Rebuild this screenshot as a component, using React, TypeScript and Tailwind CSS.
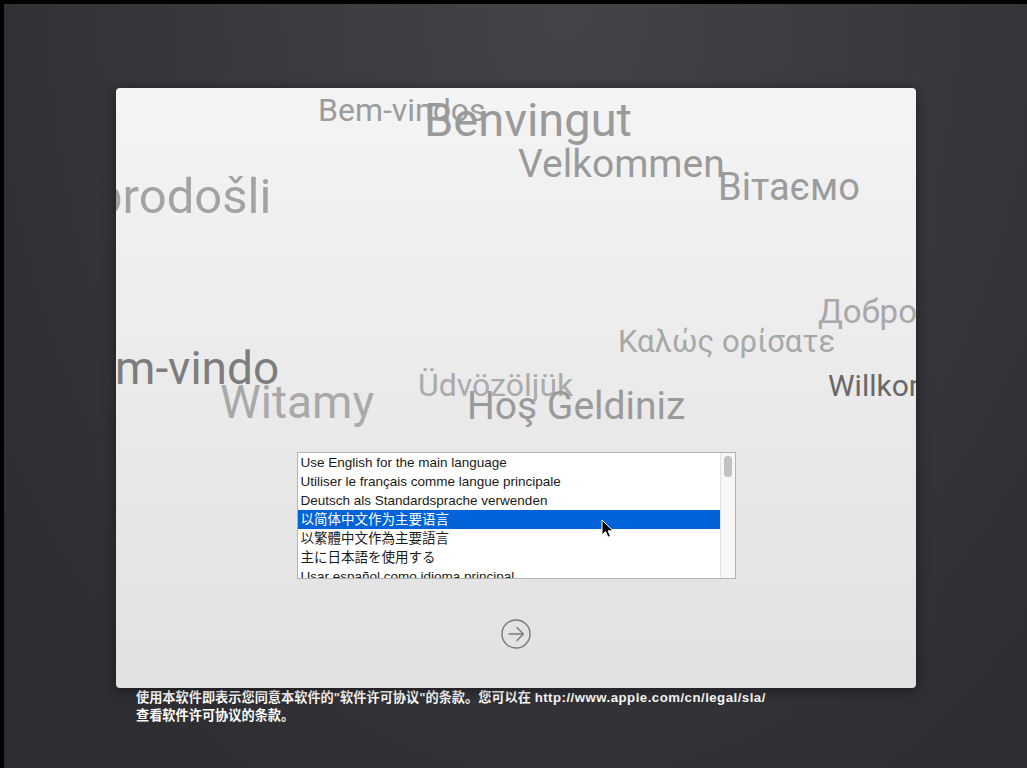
import React from "react";

// Welcome words scattered over the panel. Their place on the canvas is the
// content itself, so they are absolutely positioned (relative to the panel).
const words: { text: string; left: number; top: number; size: string; color: string }[] = [
  { text: "Dobrodošli", left: -81, top: 84, size: "text-[49px]", color: "text-[#a3a3a3]" },
  { text: "Bem-vindos", left: 202, top: 6, size: "text-[32px]", color: "text-[#9c9c9c]" },
  { text: "Benvingut", left: 308, top: 8, size: "text-[47px]", color: "text-[#9a9a9a]" },
  { text: "Velkommen", left: 402, top: 57, size: "text-[39px]", color: "text-[#9a9a9a]" },
  { text: "Вітаємо", left: 602, top: 80, size: "text-[38px]", color: "text-[#9c9c9c]" },
  { text: "Добро пожаловать", left: 702, top: 207, size: "text-[33px]", color: "text-[#a8a8a8]" },
  { text: "Καλώς ορίσατε", left: 502, top: 238, size: "text-[31px]", color: "text-[#a8a8a8]" },
  { text: "Bem-vindo", left: -54, top: 257, size: "text-[46px]", color: "text-[#7d7d7d]" },
  { text: "Witamy", left: 104, top: 291, size: "text-[46px]", color: "text-[#a9a9a9]" },
  { text: "Üdvözöljük", left: 302, top: 281, size: "text-[32px]", color: "text-[#ababab]" },
  { text: "Hoş Geldiniz", left: 351, top: 299, size: "text-[39px]", color: "text-[#9a9a9a]" },
  { text: "Willkommen", left: 712, top: 283, size: "text-[30px]", color: "text-[#686868]" }
];

const languages: { label: string; font: string }[] = [
  { label: "Use English for the main language", font: "font-['Liberation_Sans',sans-serif]" },
  { label: "Utiliser le français comme langue principale", font: "font-['Liberation_Sans',sans-serif]" },
  { label: "Deutsch als Standardsprache verwenden", font: "font-['Liberation_Sans',sans-serif]" },
  { label: "以简体中文作为主要语言", font: "font-['Liberation_Sans','Noto_Sans_CJK_SC',sans-serif]" },
  { label: "以繁體中文作為主要語言", font: "font-['Liberation_Sans','Noto_Sans_CJK_TC',sans-serif]" },
  { label: "主に日本語を使用する", font: "font-['Liberation_Sans','Noto_Sans_CJK_JP',sans-serif]" },
  { label: "Usar español como idioma principal", font: "font-['Liberation_Sans',sans-serif]" },
  { label: "Usa l'italiano come lingua principale", font: "font-['Liberation_Sans',sans-serif]" },
  { label: "Nederlands als hoofdtaal gebruiken", font: "font-['Liberation_Sans',sans-serif]" }
];

const SELECTED = 3;

function Cursor() {
  return (
    <svg
      className="pointer-events-none absolute left-[303px] top-[66px]"
      width="13"
      height="20"
      viewBox="0 0 13 20"
    >
      <path
        d="M1 1 L1 16 L4.6 12.6 L7 18.2 L9.4 17.2 L7.1 11.8 L12 11.8 Z"
        fill="#000"
        stroke="#fff"
        strokeWidth="1"
        strokeLinejoin="round"
      />
    </svg>
  );
}

function LanguageList() {
  return (
    <div className="relative flex h-[127px] w-[439px] border border-[#b4b4b4] bg-white">
      <ul className="flex-1 overflow-hidden">
        {languages.map((lang, i) => (
          <li
            key={lang.label}
            className={`h-[19px] whitespace-nowrap px-[3px] text-[13.5px] leading-[19px] ${lang.font} ${
              i === SELECTED ? "bg-[#0063d9] text-white" : "text-[#1a1a1a]"
            }`}
          >
            {lang.label}
          </li>
        ))}
      </ul>
      <div className="w-[15px] border-l border-[#e2e2e2] bg-[#f7f7f7] px-[3px] pt-[3px]">
        <div className="h-[21px] w-[8px] rounded-full bg-[#c2c2c2]" />
      </div>
      <Cursor />
    </div>
  );
}

function ContinueButton() {
  return (
    <button type="button" className="mt-[40px] h-[30px] w-[30px]">
      <svg width="30" height="30" viewBox="0 0 30 30" fill="none" stroke="#7a7a7a" strokeWidth="1.4">
        <circle cx="15" cy="15" r="14" />
        <path d="M8 15 H22" strokeLinecap="round" />
        <path d="M16 8.5 L22.3 15 L16 21.5" strokeLinecap="round" strokeLinejoin="round" />
      </svg>
    </button>
  );
}

export default function App() {
  return (
    <div className="h-[768px] w-full overflow-hidden border-l-4 border-t-4 border-black bg-[radial-gradient(ellipse_at_55%_0%,#434348_0%,#38383d_45%,#2e2d32_85%)]">
      <div className="pl-[112px] pt-[84px]">
        <div className="relative flex h-[600px] w-[800px] flex-col items-center overflow-hidden rounded-[4px] bg-gradient-to-b from-[#f4f4f4] to-[#e1e1e1] shadow-[0_2px_14px_rgba(0,0,0,0.45)]">
          {words.map(w => (
            <span
              key={w.text}
              className={`absolute whitespace-nowrap font-['Roboto',sans-serif] leading-none ${w.size} ${w.color}`}
              style={{ left: w.left, top: w.top }}
            >
              {w.text}
            </span>
          ))}
          <div className="mt-[364px]">
            <LanguageList />
          </div>
          <ContinueButton />
        </div>
        <div className="pl-[20px] pt-[1px] font-['Liberation_Sans','Noto_Sans_CJK_SC',sans-serif] text-[13.2px] font-semibold text-white">
          <div className="h-[18px] whitespace-nowrap leading-[18px]">
            使用本软件即表示您同意本软件的"软件许可协议"的条款。您可以在{" "}
            <span className="tracking-[0.5px]">http://www.apple.com/cn/legal/sla/</span>
          </div>
          <div className="h-[18px] leading-[18px]">查看软件许可协议的条款。</div>
        </div>
      </div>
    </div>
  );
}
